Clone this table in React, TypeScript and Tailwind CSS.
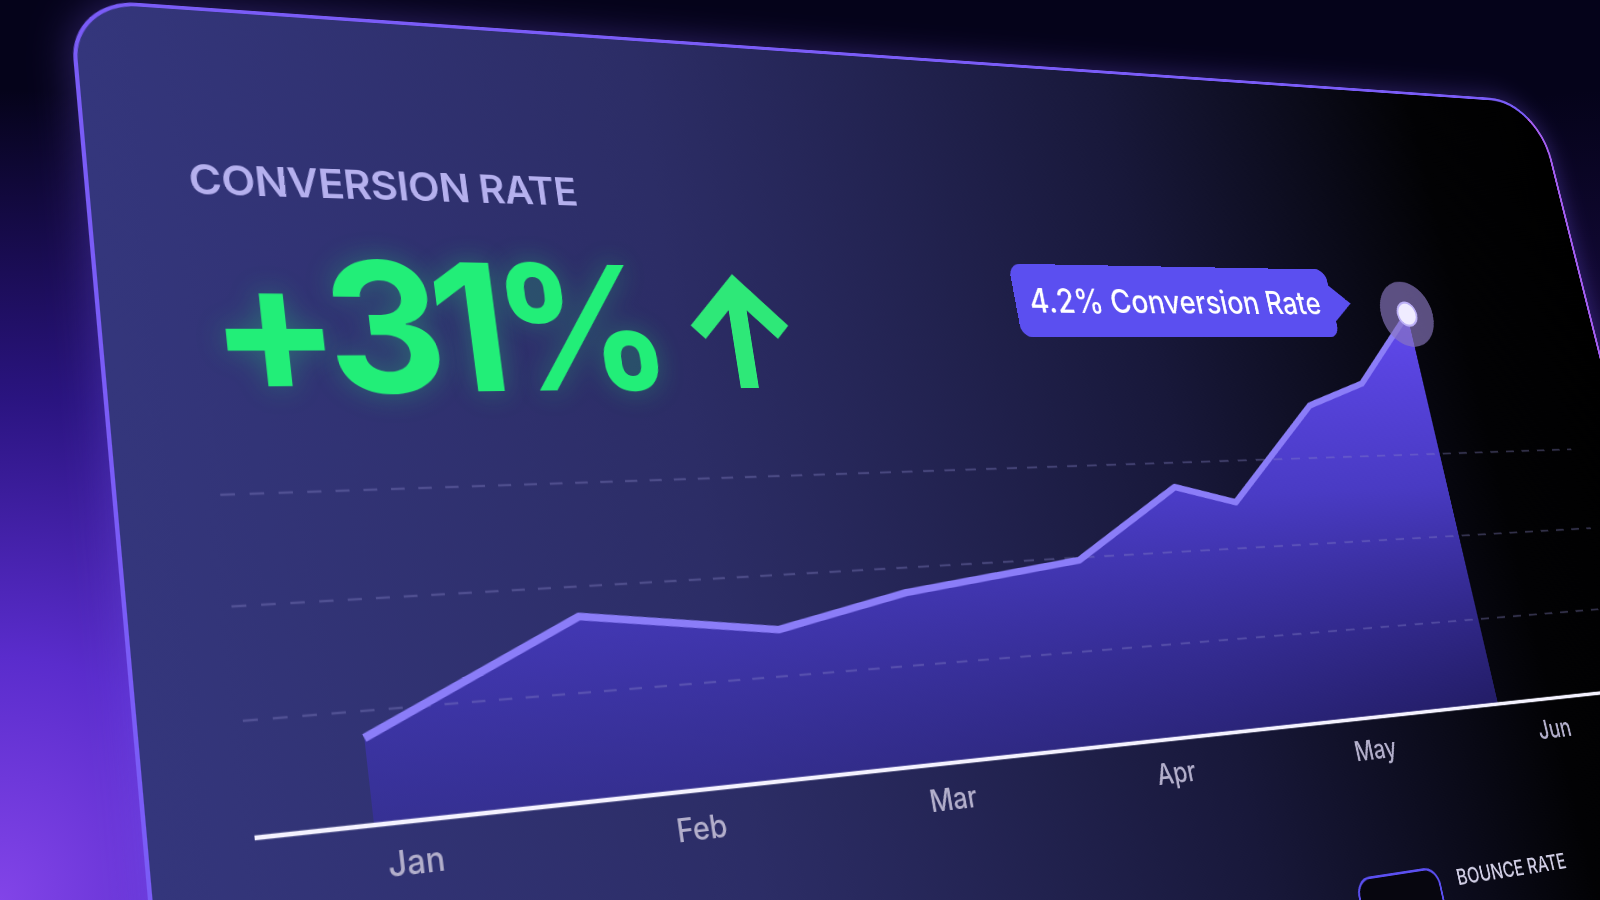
import React from "react";

// flat size of the card; BASE is the chart baseline, used as the lower edge of the mapping
const W = 2000
const BASE = 837

// where the card lands on screen: top-left, top-right, baseline-right, baseline-left
const QUAD: [number, number][] = [[68, -2], [1537, 101], [1683, 684], [143.5, 850]]

function perspective(quad: [number, number][], w: number, h: number) {
    const [[x0, y0], [x1, y1], [x2, y2], [x3, y3]] = quad
    const dx1 = x1 - x2, dx2 = x3 - x2, dx3 = x0 - x1 + x2 - x3
    const dy1 = y1 - y2, dy2 = y3 - y2, dy3 = y0 - y1 + y2 - y3
    const den = dx1 * dy2 - dx2 * dy1
    const g = (dx3 * dy2 - dx2 * dy3) / den
    const hh = (dx1 * dy3 - dx3 * dy1) / den
    const a = (x1 - x0 + g * x1) / w
    const d = (y1 - y0 + g * y1) / w
    const b = (x3 - x0 + hh * x3) / h
    const e = (y3 - y0 + hh * y3) / h
    const m = [a, d, 0, g / w, b, e, 0, hh / h, 0, 0, 1, 0, x0, y0, 0, 1]
    return `matrix3d(${m.join(",")})`
}

const months = ["Jan", "Feb", "Mar", "Apr", "May", "Jun"]

// chart points, x from the card's content edge, y from the chart's top (baseline at 397)
const points: [number, number][] = [
    [113, 314], [348, 210], [572, 238], [735, 207], [972, 182],
    [1129, 100], [1216, 122], [1364, 2], [1458, -26], [1562, -120],
]

function Chart() {
    const line = points.map(([x, y]) => `${x},${y}`).join(" ")
    const area = `M113,397 L${line.replace(/ /g, " L")} L1564,397 Z`

    return <svg width={1800} height={397} viewBox="0 0 1800 397" className="block overflow-visible">
        <defs>
            <linearGradient id="area" x1="0" y1="-120" x2="0" y2="397" gradientUnits="userSpaceOnUse">
                <stop offset="0" stopColor="#6149ee" />
                <stop offset="0.45" stopColor="#5040d6" stopOpacity="0.9" />
                <stop offset="1" stopColor="#3a2fae" stopOpacity="0.55" />
            </linearGradient>
        </defs>

        <path d={area} fill="url(#area)" />

        {
            [70, 179, 288].map((y) => <line key={y} x1={0} x2={1800} y1={y} y2={y} stroke="#8a86c8" strokeOpacity={0.35} strokeWidth={2.5} strokeDasharray="14 14" />)
        }

        <polyline points={line} fill="none" stroke="#8b7df8" strokeWidth={8} strokeLinejoin="round" />
        <line x1={0} x2={1800} y1={397} y2={397} stroke="#f4f2ff" strokeWidth={4.5} />

        <circle cx={1562} cy={-120} r={45} fill="#8a78c0" fillOpacity={0.65} />
        <circle cx={1562} cy={-120} r={16} fill="#f0ecff" stroke="#bcb0f6" strokeWidth={3} />
    </svg>
}

function Card() {
    return <div
        className="relative w-[2000px] h-[1200px] origin-top-left rounded-tl-[66px] rounded-tr-[90px] border-[4px] border-[#7a5cf7] border-r-[#a45ef0] bg-[linear-gradient(90deg,#34367c_0%,#2c2d66_30%,#18183a_62%,#0a0a18_79%,#020204_88%,#000000_100%)] pl-[96px] pt-[161px] shadow-[0_0_40px_rgba(124,92,248,0.35)] [font-family:Inter,'Noto_Sans',sans-serif]"
        style={{ transform: perspective(QUAD, W, BASE) }}
    >
        <p className="text-[44px] leading-none font-semibold tracking-[-0.01em] text-[#b5b0ee]">CONVERSION RATE</p>

        <div className="mt-[35px] flex items-start">
            <span className="ml-[4px] text-[192px] leading-none font-bold tracking-[-0.07em] text-[#22ee78] [text-shadow:0_0_30px_rgba(34,238,120,0.3)]">
                +31%
            </span>
            <svg className="ml-[42px] mt-[30px]" width={120} height={136} viewBox="0 0 120 136" fill="none" stroke="#2ee878" strokeWidth={22} strokeLinecap="butt" strokeLinejoin="miter">
                <path d="M60 136V20M8 72L60 20l52 52" />
            </svg>
        </div>

        <div className="relative mt-[4px] w-[1800px]">
            <Chart />

            <div className="absolute left-[951px] top-[-180px] flex items-center">
                <div className="flex h-[92px] items-center rounded-[16px] bg-[#5b4ff0] px-[20px] text-[42px] leading-none font-medium text-white">
                    4.2% Conversion Rate
                </div>
                <svg width={32} height={50} viewBox="0 0 32 50" className="-ml-px">
                    <path d="M0 0L32 25L0 50Z" fill="#5b4ff0" />
                </svg>
            </div>

            <div className="mt-[23px] flex">
                {
                    months.map((month) => <span key={month} className="w-[300px] text-center text-[32px] leading-none font-medium text-[#b3afcb]">
                        { month }
                    </span>)
                }
            </div>

            <div className="mt-[130px] flex items-start pl-[1276px]">
                <div className="h-[64px] w-[130px] rounded-[22px] border-[3px] border-[#5b4ff0] bg-[#07060f]" />
                <span className="ml-[27px] mt-[4px] text-[26px] leading-none font-medium text-[#d2cfe6]">BOUNCE RATE</span>
            </div>
        </div>
    </div>
}

export default function App() {
    return <div className="h-[900px] w-[1600px] overflow-hidden bg-[#05031a] bg-[radial-gradient(ellipse_48%_90%_at_0%_100%,#8244e8_0%,#5a2ccc_30%,#2a1480_62%,transparent_100%),radial-gradient(ellipse_25%_60%_at_100%_70%,#26115f_0%,transparent_100%)]">
        <Card />
    </div>
}
